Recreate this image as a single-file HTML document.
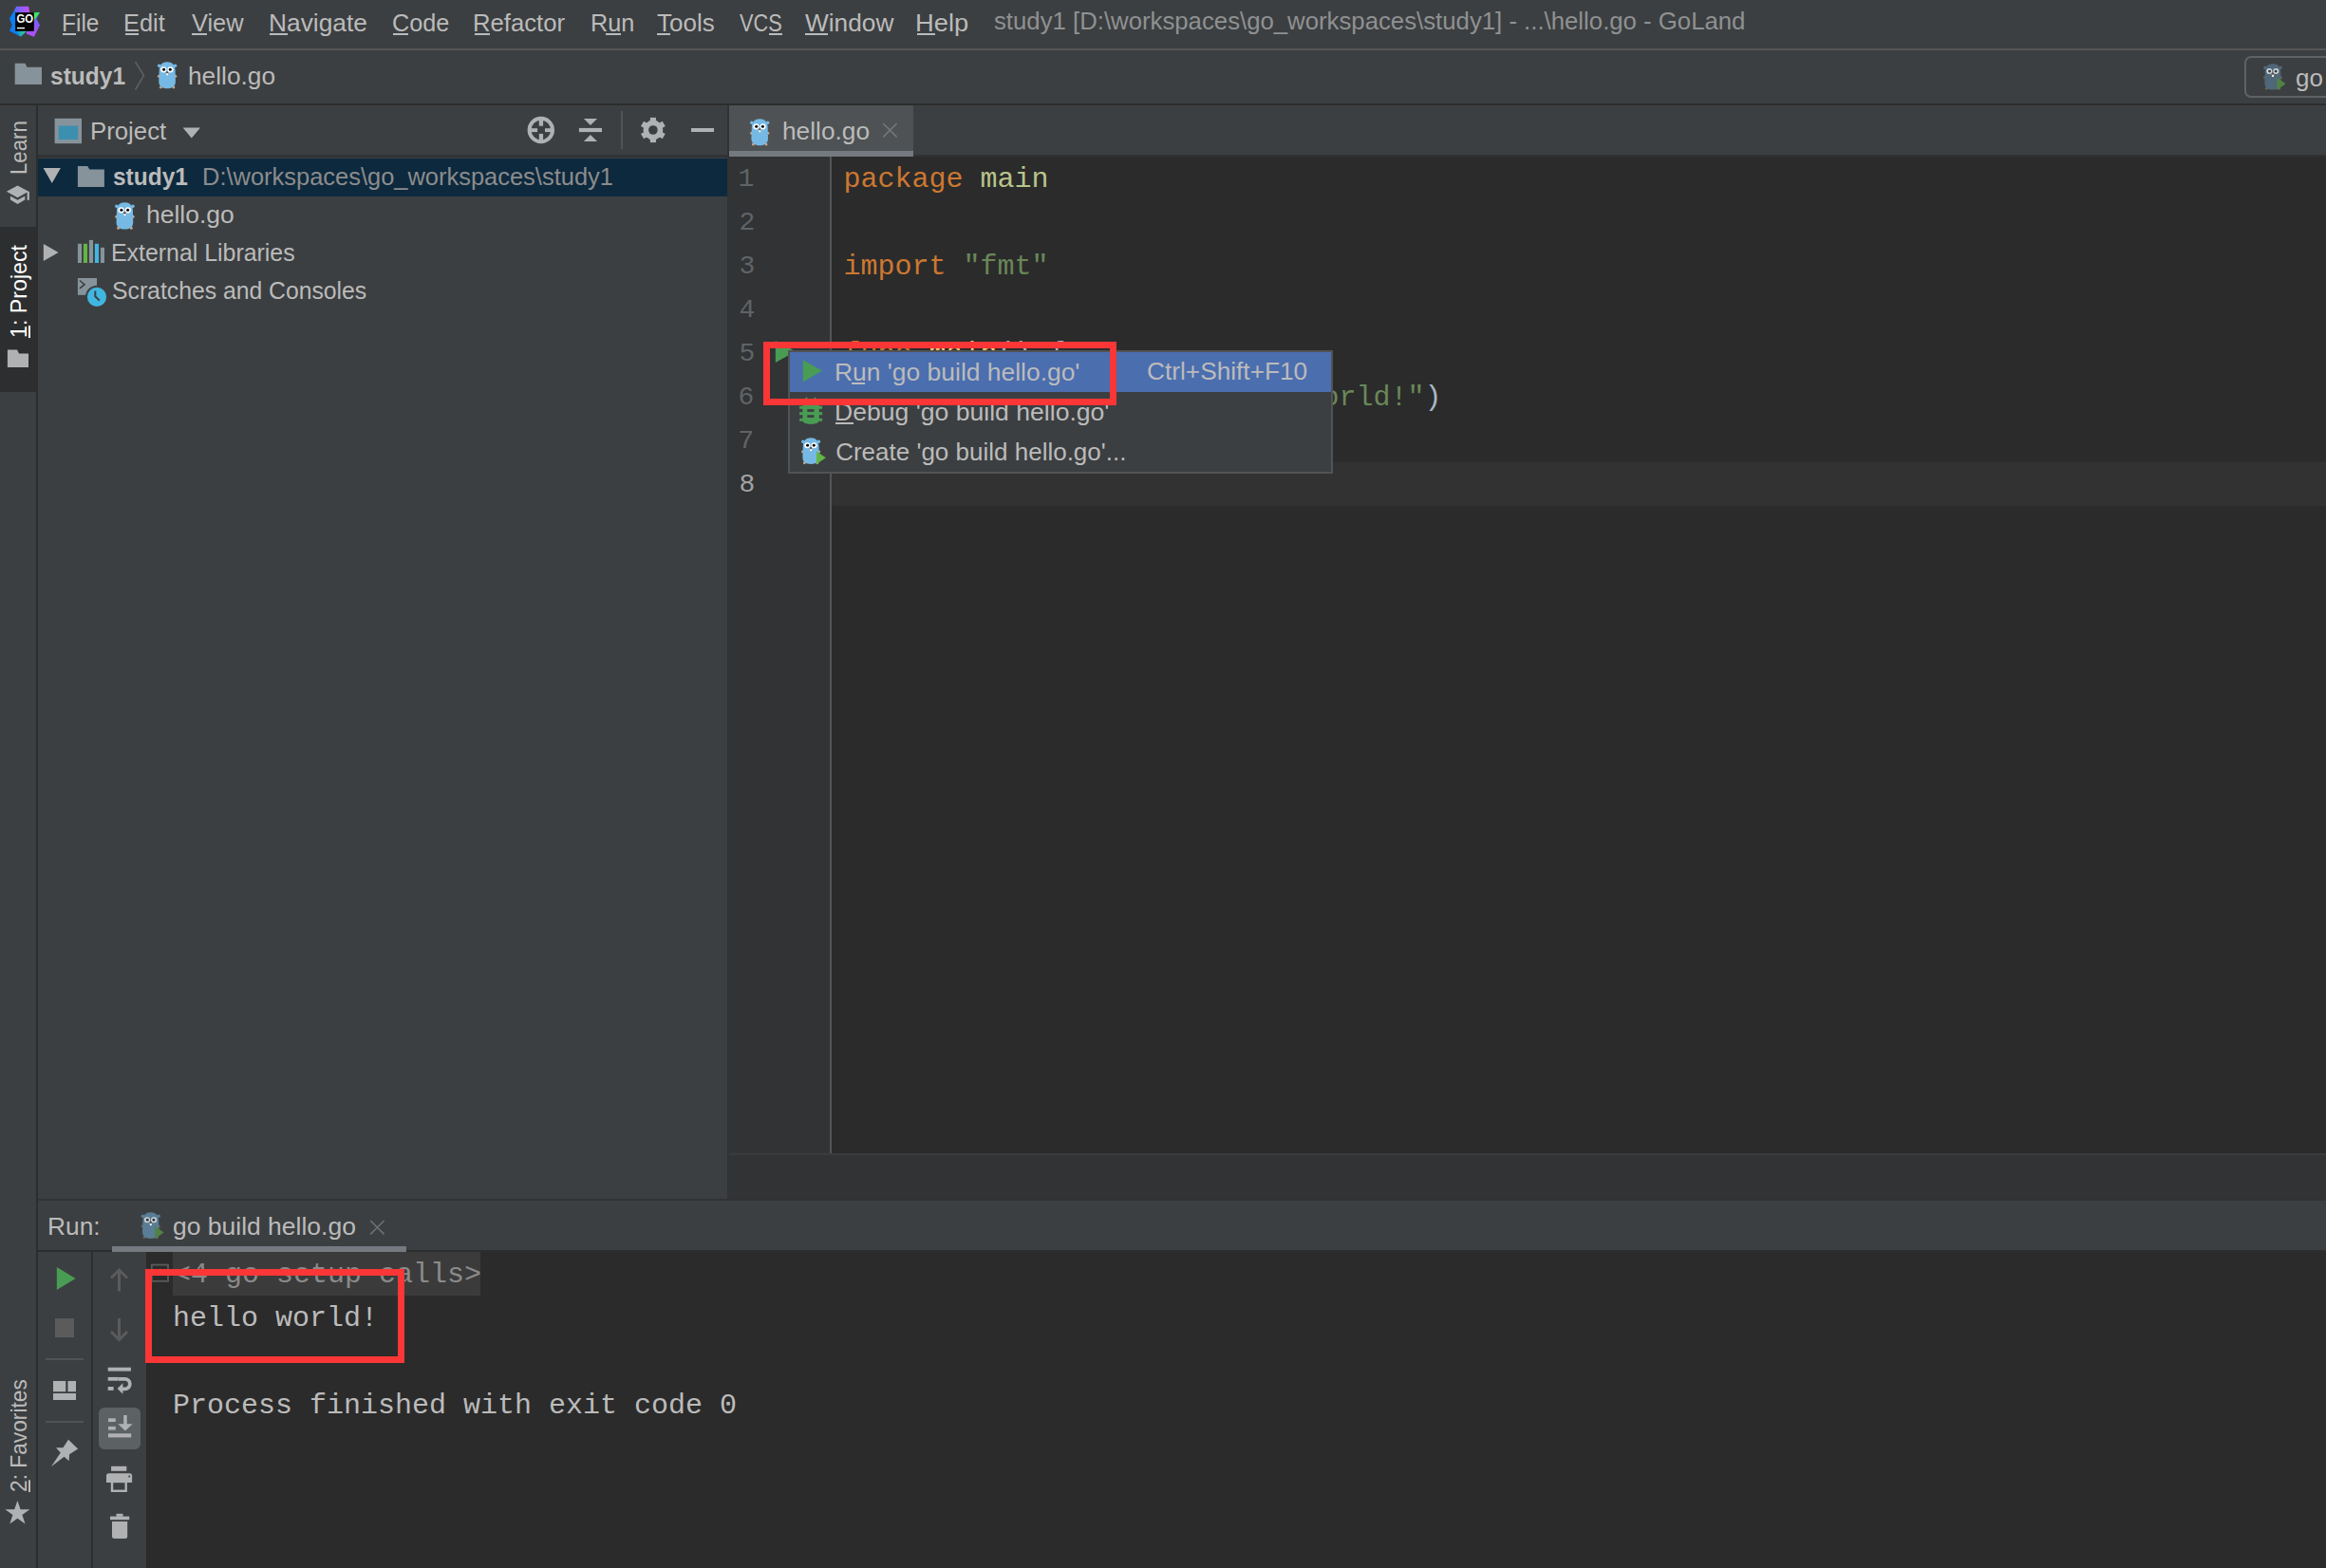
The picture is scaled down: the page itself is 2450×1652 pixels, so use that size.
<!DOCTYPE html>
<html><head><meta charset="utf-8"><style>
html,body{margin:0;padding:0;width:2450px;height:1652px;overflow:hidden;background:#3c3f41;}
.t{position:absolute;line-height:0;white-space:pre;}
svg{overflow:visible}
</style></head><body>
<div style="position:absolute;left:0px;top:51px;width:2450px;height:2px;background:#555555;"></div>
<div style="position:absolute;left:0px;top:109px;width:2450px;height:2px;background:#2d2d2d;"></div>
<div style="position:absolute;left:38px;top:111px;width:2px;height:1541px;background:#2d2d2d;"></div>
<div style="position:absolute;left:0px;top:239px;width:38px;height:174px;background:#2c2e2f;"></div>
<div style="position:absolute;left:40px;top:163px;width:726px;height:3px;background:#323334;"></div>
<div style="position:absolute;left:40px;top:167px;width:726px;height:40px;background:#0d293e;"></div>
<div style="position:absolute;left:766px;top:111px;width:2px;height:1152px;background:#313233;"></div>
<div style="position:absolute;left:768px;top:111px;width:194px;height:48px;background:#4e5254;"></div>
<div style="position:absolute;left:768px;top:159px;width:194px;height:6px;background:#747a80;"></div>
<div style="position:absolute;left:962px;top:163px;width:1488px;height:2px;background:#313131;"></div>
<div style="position:absolute;left:767px;top:165px;width:107px;height:1050px;background:#313335;"></div>
<div style="position:absolute;left:874px;top:165px;width:2px;height:1050px;background:#555555;"></div>
<div style="position:absolute;left:876px;top:165px;width:1574px;height:1050px;background:#2b2b2b;"></div>
<div style="position:absolute;left:876px;top:487px;width:1574px;height:46px;background:#323232;"></div>
<div style="position:absolute;left:767px;top:1215px;width:1683px;height:48px;background:#313335;"></div>
<div style="position:absolute;left:768px;top:1215px;width:1682px;height:2px;background:#393b3d;"></div>
<div style="position:absolute;left:40px;top:1263px;width:2410px;height:2px;background:#313233;"></div>
<div style="position:absolute;left:40px;top:1317px;width:2410px;height:2px;background:#2d2d2d;"></div>
<div style="position:absolute;left:118px;top:1313px;width:310px;height:6px;background:#747a80;"></div>
<div style="position:absolute;left:96px;top:1319px;width:2px;height:333px;background:#2d2d2d;"></div>
<div style="position:absolute;left:154px;top:1319px;width:2296px;height:333px;background:#2b2b2b;"></div>
<div style="position:absolute;left:182px;top:1319px;width:324px;height:46px;background:#3b3b3b;"></div>
<div style="position:absolute;left:66px;top:35px;width:14px;height:2px;background:#bbbbbb;"></div>
<div style="position:absolute;left:132px;top:35px;width:14px;height:2px;background:#bbbbbb;"></div>
<div style="position:absolute;left:202px;top:35px;width:16px;height:2px;background:#bbbbbb;"></div>
<div style="position:absolute;left:284px;top:35px;width:19px;height:2px;background:#bbbbbb;"></div>
<div style="position:absolute;left:414px;top:35px;width:16px;height:2px;background:#bbbbbb;"></div>
<div style="position:absolute;left:500px;top:35px;width:16px;height:2px;background:#bbbbbb;"></div>
<div style="position:absolute;left:638px;top:35px;width:16px;height:2px;background:#bbbbbb;"></div>
<div style="position:absolute;left:692px;top:35px;width:14px;height:2px;background:#bbbbbb;"></div>
<div style="position:absolute;left:810px;top:35px;width:14px;height:2px;background:#bbbbbb;"></div>
<div style="position:absolute;left:848px;top:35px;width:24px;height:2px;background:#bbbbbb;"></div>
<div style="position:absolute;left:966px;top:35px;width:19px;height:2px;background:#bbbbbb;"></div>
<svg style="position:absolute;left:0px;top:0px;" width="50" height="50" viewBox="0 0 50 50">
<defs>
<linearGradient id="lg1" x1="0" y1="0" x2="1" y2="0"><stop offset="0" stop-color="#5a6cff"/><stop offset="1" stop-color="#c84cf5"/></linearGradient>
<linearGradient id="lg2" x1="0" y1="0" x2="1" y2="0"><stop offset="0" stop-color="#0f86f5"/><stop offset="1" stop-color="#2ee07a"/></linearGradient>
<linearGradient id="lg3" x1="0" y1="0" x2="0" y2="1"><stop offset="0" stop-color="#4b6bff"/><stop offset="1" stop-color="#b94af7"/></linearGradient>
</defs>
<polygon points="17.2,6.8 30.1,6.8 31.3,13.3 16.2,13.3 15.2,10.4" fill="url(#lg1)"/>
<polygon points="15.2,10.4 16.2,13.3 16.2,32.7 21.8,38.7 10,32.6 12.7,26.5 10,19.6" fill="#0a7ff8"/>
<polygon points="16.2,32.7 28,32.7 21.8,38.7" fill="url(#lg2)"/>
<polygon points="28,32.7 35.7,32.7 35.7,22 42,13.1 38.5,20 42,26.5 35.9,38.7 27.5,35.4" fill="url(#lg3)"/>
<polygon points="35.7,13.3 42,13.1 35.7,22" fill="#3ae866"/>
<rect x="16.2" y="13.3" width="19.5" height="19.4" fill="#000"/>
<text x="17.4" y="24.1" font-family="Liberation Sans" font-weight="bold" font-size="12.2" fill="#fff" textLength="17.6" lengthAdjust="spacingAndGlyphs">GO</text>
<rect x="18" y="28.9" width="8" height="1.4" fill="#fff"/>
</svg>
<svg style="position:absolute;left:15px;top:66px;" width="30" height="24" viewBox="0 0 30 24"><path d="M0.7,0.8 H11.5 L13.5,4.7 H29 V23 H0.7 Z" fill="#87939a"/></svg>
<svg style="position:absolute;left:140px;top:64px;" width="14" height="32" viewBox="0 0 14 32"><path d="M2.5,1 L11.5,15.5 L2.5,30.5" fill="none" stroke="#5d5f61" stroke-width="1.6"/></svg>
<svg style="position:absolute;left:165.9px;top:64.8px;" width="20.2" height="28.6" viewBox="0 0 20.2 28.6"><g>
<ellipse cx="1.6" cy="4.3" rx="1.7" ry="1.8" fill="#76b9e4"/><ellipse cx="18.6" cy="4.3" rx="1.7" ry="1.8" fill="#76b9e4"/>
<circle cx="1.4" cy="15.2" r="1.5" fill="#c9a184"/><circle cx="18.8" cy="15.2" r="1.5" fill="#c9a184"/>
<circle cx="3.3" cy="27" r="1.5" fill="#c9a184"/><circle cx="16.9" cy="27" r="1.5" fill="#c9a184"/>
<path d="M1.7,9 C1.7,3 5,0.2 10.1,0.2 C15.2,0.2 18.6,3 18.6,9 L18.9,21 C18.9,26 15.3,28.3 10.1,28.3 C4.9,28.3 1.3,26 1.3,21 Z" fill="#76b9e4"/>
<circle cx="6.3" cy="8.3" r="3.1" fill="#ffffff"/><circle cx="13.5" cy="8.3" r="3.1" fill="#ffffff"/>
<circle cx="6.6" cy="8.3" r="1.5" fill="#000000"/><circle cx="13.3" cy="8.3" r="1.5" fill="#000000"/>
<ellipse cx="10.1" cy="11.6" rx="1.6" ry="1.1" fill="#c9a184"/><ellipse cx="10.1" cy="11.1" rx="1.1" ry="0.7" fill="#1a1a1a"/>
<rect x="9.2" y="12.4" width="1.9" height="1.9" fill="#ffffff"/>
</g></svg>
<div style="position:absolute;left:2364px;top:59px;width:200px;height:44px;background:transparent;border:2px solid #5f6163;border-radius:7px;box-sizing:border-box;"></div>
<svg style="position:absolute;left:2383.6px;top:66.7px;" width="20" height="27.9" viewBox="0 0 20.2 28.6"><g>
<ellipse cx="1.6" cy="4.3" rx="1.7" ry="1.8" fill="#4f6778"/><ellipse cx="18.6" cy="4.3" rx="1.7" ry="1.8" fill="#4f6778"/>
<circle cx="1.4" cy="15.2" r="1.5" fill="#6f6257"/><circle cx="18.8" cy="15.2" r="1.5" fill="#6f6257"/>
<circle cx="3.3" cy="27" r="1.5" fill="#6f6257"/><circle cx="16.9" cy="27" r="1.5" fill="#6f6257"/>
<path d="M1.7,9 C1.7,3 5,0.2 10.1,0.2 C15.2,0.2 18.6,3 18.6,9 L18.9,21 C18.9,26 15.3,28.3 10.1,28.3 C4.9,28.3 1.3,26 1.3,21 Z" fill="#4f6778"/>
<circle cx="6.3" cy="8.3" r="3.1" fill="#cfd3d6"/><circle cx="13.5" cy="8.3" r="3.1" fill="#cfd3d6"/>
<circle cx="6.6" cy="8.3" r="1.5" fill="#2b3a45"/><circle cx="13.3" cy="8.3" r="1.5" fill="#2b3a45"/>
<ellipse cx="10.1" cy="11.6" rx="1.6" ry="1.1" fill="#c9a184"/><ellipse cx="10.1" cy="11.1" rx="1.1" ry="0.7" fill="#1a1a1a"/>
<rect x="9.2" y="12.4" width="1.9" height="1.9" fill="#ffffff"/>
</g><path d="M14.6,14.8 L23.9,21.7 L14.6,28.6 Z" fill="#4f8444"/></svg>
<svg style="position:absolute;left:57px;top:124px;" width="30" height="28" viewBox="0 0 30 28"><rect x="0.6" y="0.8" width="28.4" height="26.4" fill="#87939a"/><rect x="4.6" y="8.5" width="20.6" height="14.6" fill="#3d8fb0"/></svg>
<svg style="position:absolute;left:192px;top:134px;" width="20" height="12" viewBox="0 0 20 12"><path d="M0.6,0.6 H19 L9.8,11.4 Z" fill="#afb1b3"/></svg>
<svg style="position:absolute;left:550px;top:117px;" width="40" height="40" viewBox="0 0 40 40"><circle cx="19.8" cy="20" r="12.25" fill="none" stroke="#afb1b3" stroke-width="3.9"/><rect x="17.8" y="8" width="4.3" height="7.7" fill="#afb1b3"/><rect x="17.8" y="23.9" width="4.3" height="7.7" fill="#afb1b3"/><rect x="8" y="18.2" width="8.1" height="3.9" fill="#afb1b3"/><rect x="24" y="18.2" width="8.1" height="3.9" fill="#afb1b3"/></svg>
<svg style="position:absolute;left:600px;top:117px;" width="40" height="40" viewBox="0 0 40 40"><path d="M14.9,7.9 H29 L21.95,15 Z" fill="#afb1b3"/><rect x="9.9" y="17.9" width="24.1" height="4.2" fill="#afb1b3"/><path d="M14.9,32 H29 L21.95,25 Z" fill="#afb1b3"/></svg>
<div style="position:absolute;left:654px;top:117px;width:2px;height:40px;background:#515354;"></div>
<svg style="position:absolute;left:668px;top:117px;" width="40" height="40" viewBox="0 0 40 40"><g transform="translate(19.9,20)"><circle r="10.4" fill="#afb1b3"/><rect x="-3.05" y="-13.1" width="6.1" height="8" fill="#afb1b3" transform="rotate(0)"/><rect x="-3.05" y="-13.1" width="6.1" height="8" fill="#afb1b3" transform="rotate(60)"/><rect x="-3.05" y="-13.1" width="6.1" height="8" fill="#afb1b3" transform="rotate(120)"/><rect x="-3.05" y="-13.1" width="6.1" height="8" fill="#afb1b3" transform="rotate(180)"/><rect x="-3.05" y="-13.1" width="6.1" height="8" fill="#afb1b3" transform="rotate(240)"/><rect x="-3.05" y="-13.1" width="6.1" height="8" fill="#afb1b3" transform="rotate(300)"/><circle r="4.8" fill="#3c3f41"/></g></svg>
<div style="position:absolute;left:728px;top:135px;width:24px;height:4.3px;background:#afb1b3;"></div>
<svg style="position:absolute;left:45px;top:176px;" width="20" height="18" viewBox="0 0 20 18"><path d="M0.6,1 H18.9 L9.75,17 Z" fill="#afb1b3"/></svg>
<svg style="position:absolute;left:81px;top:174px;" width="30" height="24" viewBox="0 0 30 24"><path d="M0.9,1 H11.2 L13.3,4.6 H28.9 V23 H0.9 Z" fill="#87939a"/></svg>
<svg style="position:absolute;left:121px;top:212.5px;" width="20.8" height="28.8" viewBox="0 0 20.2 28.6"><g>
<ellipse cx="1.6" cy="4.3" rx="1.7" ry="1.8" fill="#76b9e4"/><ellipse cx="18.6" cy="4.3" rx="1.7" ry="1.8" fill="#76b9e4"/>
<circle cx="1.4" cy="15.2" r="1.5" fill="#c9a184"/><circle cx="18.8" cy="15.2" r="1.5" fill="#c9a184"/>
<circle cx="3.3" cy="27" r="1.5" fill="#c9a184"/><circle cx="16.9" cy="27" r="1.5" fill="#c9a184"/>
<path d="M1.7,9 C1.7,3 5,0.2 10.1,0.2 C15.2,0.2 18.6,3 18.6,9 L18.9,21 C18.9,26 15.3,28.3 10.1,28.3 C4.9,28.3 1.3,26 1.3,21 Z" fill="#76b9e4"/>
<circle cx="6.3" cy="8.3" r="3.1" fill="#ffffff"/><circle cx="13.5" cy="8.3" r="3.1" fill="#ffffff"/>
<circle cx="6.6" cy="8.3" r="1.5" fill="#000000"/><circle cx="13.3" cy="8.3" r="1.5" fill="#000000"/>
<ellipse cx="10.1" cy="11.6" rx="1.6" ry="1.1" fill="#c9a184"/><ellipse cx="10.1" cy="11.1" rx="1.1" ry="0.7" fill="#1a1a1a"/>
<rect x="9.2" y="12.4" width="1.9" height="1.9" fill="#ffffff"/>
</g></svg>
<svg style="position:absolute;left:45px;top:256px;" width="18" height="20" viewBox="0 0 18 20"><path d="M0.8,1 L16.6,10 L0.8,19 Z" fill="#afb1b3"/></svg>
<svg style="position:absolute;left:81px;top:252px;" width="30" height="26" viewBox="0 0 30 26"><rect x="0.9" y="4.8" width="4.1" height="20.2" fill="#87939a"/><rect x="6.9" y="4.8" width="4.1" height="20.2" fill="#62b543"/><rect x="12.9" y="0.9" width="4.1" height="24.1" fill="#87939a"/><rect x="18.9" y="4.8" width="4.1" height="20.2" fill="#40b6e0"/><rect x="24.9" y="8.8" width="4.1" height="16.2" fill="#87939a"/></svg>
<svg style="position:absolute;left:81px;top:292px;" width="34" height="34" viewBox="0 0 34 34"><rect x="0.9" y="1" width="20.1" height="17.8" fill="#87939a"/><path d="M3,3.5 L8,7.7 L3,11.9" fill="none" stroke="#3c3f41" stroke-width="1.6"/><circle cx="21" cy="20.8" r="12" fill="#3c3f41"/><circle cx="21" cy="20.8" r="10.1" fill="#40b6e0"/><path d="M19.3,14.5 V20.3 L23.8,24.6" fill="none" stroke="#3c3f41" stroke-width="2"/></svg>
<svg style="position:absolute;left:2px;top:188px;" width="35" height="35" viewBox="0 0 35 35"><path d="M16.5,7.4 L28.1,13.8 L16.5,20.3 L4.9,13.8 Z M26.6,13.8 H28.9 V22.8 H26.6 Z M8.9,18.5 L16.5,22.8 L24.3,18.5 V22.5 L16.5,26.9 L8.9,22.5 Z" fill="#afb1b3"/></svg>
<svg style="position:absolute;left:7px;top:368px;" width="24" height="20" viewBox="0 0 24 20"><path d="M0.9,0.6 H11 L13,4.5 H23 V19 H0.9 Z" fill="#afb1b3"/></svg>
<svg style="position:absolute;left:5px;top:1580px;" width="28" height="28" viewBox="0 0 28 28"><path d="M13.4,1 L16.6,10.3 L26.4,10.3 L18.4,16 L21.5,25.6 L13.4,19.7 L5.3,25.6 L8.4,16 L0.4,10.3 L10.2,10.3 Z" fill="#afb1b3"/></svg>
<svg style="position:absolute;left:789.6px;top:124.6px;" width="20.4" height="28.6" viewBox="0 0 20.2 28.6"><g>
<ellipse cx="1.6" cy="4.3" rx="1.7" ry="1.8" fill="#76b9e4"/><ellipse cx="18.6" cy="4.3" rx="1.7" ry="1.8" fill="#76b9e4"/>
<circle cx="1.4" cy="15.2" r="1.5" fill="#c9a184"/><circle cx="18.8" cy="15.2" r="1.5" fill="#c9a184"/>
<circle cx="3.3" cy="27" r="1.5" fill="#c9a184"/><circle cx="16.9" cy="27" r="1.5" fill="#c9a184"/>
<path d="M1.7,9 C1.7,3 5,0.2 10.1,0.2 C15.2,0.2 18.6,3 18.6,9 L18.9,21 C18.9,26 15.3,28.3 10.1,28.3 C4.9,28.3 1.3,26 1.3,21 Z" fill="#76b9e4"/>
<circle cx="6.3" cy="8.3" r="3.1" fill="#ffffff"/><circle cx="13.5" cy="8.3" r="3.1" fill="#ffffff"/>
<circle cx="6.6" cy="8.3" r="1.5" fill="#000000"/><circle cx="13.3" cy="8.3" r="1.5" fill="#000000"/>
<ellipse cx="10.1" cy="11.6" rx="1.6" ry="1.1" fill="#c9a184"/><ellipse cx="10.1" cy="11.1" rx="1.1" ry="0.7" fill="#1a1a1a"/>
<rect x="9.2" y="12.4" width="1.9" height="1.9" fill="#ffffff"/>
</g></svg>
<svg style="position:absolute;left:929px;top:129px;" width="18" height="17" viewBox="0 0 18 17"><path d="M1.2,1 L15.6,15.3 M15.6,1 L1.2,15.3" stroke="#757575" stroke-width="1.7"/></svg>
<svg style="position:absolute;left:816px;top:358px;" width="24" height="26" viewBox="0 0 24 26"><path d="M0.8,1 L22,12.2 L0.8,24 Z" fill="#499c54"/></svg>
<svg style="position:absolute;left:148px;top:1277px;" width="21.5" height="28.3" viewBox="0 0 20.2 28.6"><g>
<ellipse cx="1.6" cy="4.3" rx="1.7" ry="1.8" fill="#5a7d96"/><ellipse cx="18.6" cy="4.3" rx="1.7" ry="1.8" fill="#5a7d96"/>
<circle cx="1.4" cy="15.2" r="1.5" fill="#6f6257"/><circle cx="18.8" cy="15.2" r="1.5" fill="#6f6257"/>
<circle cx="3.3" cy="27" r="1.5" fill="#6f6257"/><circle cx="16.9" cy="27" r="1.5" fill="#6f6257"/>
<path d="M1.7,9 C1.7,3 5,0.2 10.1,0.2 C15.2,0.2 18.6,3 18.6,9 L18.9,21 C18.9,26 15.3,28.3 10.1,28.3 C4.9,28.3 1.3,26 1.3,21 Z" fill="#5a7d96"/>
<circle cx="6.3" cy="8.3" r="3.1" fill="#cfd3d6"/><circle cx="13.5" cy="8.3" r="3.1" fill="#cfd3d6"/>
<circle cx="6.6" cy="8.3" r="1.5" fill="#2b3a45"/><circle cx="13.3" cy="8.3" r="1.5" fill="#2b3a45"/>
<ellipse cx="10.1" cy="11.6" rx="1.6" ry="1.1" fill="#c9a184"/><ellipse cx="10.1" cy="11.1" rx="1.1" ry="0.7" fill="#1a1a1a"/>
<rect x="9.2" y="12.4" width="1.9" height="1.9" fill="#ffffff"/>
</g><path d="M14.6,14.8 L23.9,21.7 L14.6,28.6 Z" fill="#4f8444"/></svg>
<svg style="position:absolute;left:389px;top:1285px;" width="18" height="17" viewBox="0 0 18 17"><path d="M1.2,1 L15.6,15.3 M15.6,1 L1.2,15.3" stroke="#6e6e6e" stroke-width="1.7"/></svg>
<svg style="position:absolute;left:59px;top:1334px;" width="22" height="26" viewBox="0 0 22 26"><path d="M0.8,1 L20.6,13 L0.8,25 Z" fill="#499c54"/></svg>
<div style="position:absolute;left:58px;top:1389px;width:20px;height:20px;background:#5b5b5b;"></div>
<div style="position:absolute;left:48px;top:1431px;width:40px;height:2px;background:#515354;"></div>
<svg style="position:absolute;left:55px;top:1454px;" width="26" height="22" viewBox="0 0 26 22"><rect x="1" y="1" width="13.2" height="11.2" fill="#afb1b3"/><rect x="16.5" y="1" width="8.5" height="11.2" fill="#afb1b3"/><rect x="1" y="14" width="24" height="7" fill="#afb1b3"/></svg>
<div style="position:absolute;left:48px;top:1497px;width:40px;height:2px;background:#515354;"></div>
<svg style="position:absolute;left:48px;top:1512px;" width="40" height="40" viewBox="0 0 40 40"><path d="M24,4.7 L34.1,14.5 L25.1,20.2 L24.6,27.2 L19.6,22.8 L5.9,33.3 L15.8,18.4 L11,13.3 L18.4,13.3 Z" fill="#afb1b3"/></svg>
<svg style="position:absolute;left:115px;top:1336px;" width="22" height="26" viewBox="0 0 22 26"><path d="M10.5,2 V24.5 M2,10.5 L10.5,2 L19,10.5" fill="none" stroke="#5b5b5b" stroke-width="3"/></svg>
<svg style="position:absolute;left:115px;top:1388px;" width="22" height="26" viewBox="0 0 22 26"><path d="M10.5,1 V23.5 M2,15 L10.5,23.5 L19,15" fill="none" stroke="#5b5b5b" stroke-width="3"/></svg>
<svg style="position:absolute;left:113px;top:1440px;" width="28" height="30" viewBox="0 0 28 30"><rect x="0.7" y="0.7" width="24.2" height="3.9" fill="#afb1b3"/><rect x="0.7" y="21" width="5.9" height="3.9" fill="#afb1b3"/><rect x="0.7" y="10.9" width="11" height="3.8" fill="#afb1b3"/><path d="M11.7,12.8 H18.5 A5.3,5.3 0 0 1 18.5,23.4 H15" fill="none" stroke="#afb1b3" stroke-width="3.8"/><path d="M16.4,17.2 L10.6,23.1 L16.4,28.8 Z" fill="#afb1b3"/></svg>
<div style="position:absolute;left:104px;top:1483px;width:44px;height:43.5px;background:#5c6164;border-radius:6px;"></div>
<svg style="position:absolute;left:113px;top:1490px;" width="28" height="26" viewBox="0 0 28 26"><rect x="1" y="4.3" width="7.8" height="3.7" fill="#afb1b3"/><rect x="1" y="12.9" width="7.8" height="3.7" fill="#afb1b3"/><rect x="1" y="20.3" width="24.2" height="4.1" fill="#afb1b3"/><rect x="17.2" y="1" width="3.5" height="12" fill="#afb1b3"/><path d="M11.2,10.2 H26.7 L19,17.6 Z" fill="#afb1b3"/></svg>
<svg style="position:absolute;left:111px;top:1544px;" width="30" height="28" viewBox="0 0 30 28"><rect x="6.1" y="0.8" width="16.2" height="5" fill="#afb1b3"/><path d="M1,10.8 Q1,8.2 3.6,8.2 H25.5 Q28.1,8.2 28.1,10.8 V18 H1 Z" fill="#afb1b3"/><rect x="7" y="17" width="14.7" height="9.8" fill="none" stroke="#afb1b3" stroke-width="2.4"/><circle cx="25.2" cy="11.6" r="1" fill="#3c3f41"/></svg>
<svg style="position:absolute;left:115px;top:1594px;" width="22" height="28" viewBox="0 0 22 28"><rect x="1" y="3.6" width="20.2" height="3.6" fill="#afb1b3"/><rect x="7.5" y="0.8" width="7" height="3" fill="#afb1b3"/><path d="M3,9.1 H19.2 V24.5 Q19.2,27 16.7,27 H5.5 Q3,27 3,24.5 Z" fill="#afb1b3"/></svg>
<svg style="position:absolute;left:158px;top:1331px;" width="22" height="22" viewBox="0 0 22 22"><rect x="1.8" y="1.6" width="17.2" height="17.2" fill="none" stroke="#5a5a5a" stroke-width="1.8"/><rect x="10" y="5.5" width="1.4" height="3" fill="#5a5a5a"/></svg>
<div class="t" style="left:65.22px;top:24.49px;font-size:26px;font-family:'Liberation Sans', sans-serif;font-weight:400;color:#bbbbbb;transform:scaleX(0.9408);transform-origin:0 0;">File</div>
<div class="t" style="left:130.35px;top:24.49px;font-size:26px;font-family:'Liberation Sans', sans-serif;font-weight:400;color:#bbbbbb;transform:scaleX(0.9753);transform-origin:0 0;">Edit</div>
<div class="t" style="left:202.00px;top:24.49px;font-size:26px;font-family:'Liberation Sans', sans-serif;font-weight:400;color:#bbbbbb;transform:scaleX(0.9767);transform-origin:0 0;">View</div>
<div class="t" style="left:282.58px;top:24.49px;font-size:26px;font-family:'Liberation Sans', sans-serif;font-weight:400;color:#bbbbbb;transform:scaleX(1.0124);transform-origin:0 0;">Navigate</div>
<div class="t" style="left:413.03px;top:24.49px;font-size:26px;font-family:'Liberation Sans', sans-serif;font-weight:400;color:#bbbbbb;transform:scaleX(0.9721);transform-origin:0 0;">Code</div>
<div class="t" style="left:498.43px;top:24.49px;font-size:26px;font-family:'Liberation Sans', sans-serif;font-weight:400;color:#bbbbbb;transform:scaleX(0.9865);transform-origin:0 0;">Refactor</div>
<div class="t" style="left:621.66px;top:24.49px;font-size:26px;font-family:'Liberation Sans', sans-serif;font-weight:400;color:#bbbbbb;transform:scaleX(0.9721);transform-origin:0 0;">Run</div>
<div class="t" style="left:692.00px;top:24.49px;font-size:26px;font-family:'Liberation Sans', sans-serif;font-weight:400;color:#bbbbbb;">Tools</div>
<div class="t" style="left:779.00px;top:24.49px;font-size:26px;font-family:'Liberation Sans', sans-serif;font-weight:400;color:#bbbbbb;transform:scaleX(0.8359);transform-origin:0 0;">VCS</div>
<div class="t" style="left:848.00px;top:24.49px;font-size:26px;font-family:'Liberation Sans', sans-serif;font-weight:400;color:#bbbbbb;transform:scaleX(1.0097);transform-origin:0 0;">Window</div>
<div class="t" style="left:964.30px;top:24.49px;font-size:26px;font-family:'Liberation Sans', sans-serif;font-weight:400;color:#bbbbbb;transform:scaleX(1.0507);transform-origin:0 0;">Help</div>
<div class="t" style="left:1047.00px;top:22.49px;font-size:26px;font-family:'Liberation Sans', sans-serif;font-weight:400;color:#8f9192;transform:scaleX(0.9903);transform-origin:0 0;">study1 [D:\workspaces\go_workspaces\study1] - ...\hello.go - GoLand</div>
<div class="t" style="left:53.00px;top:79.99px;font-size:26px;font-family:'Liberation Sans', sans-serif;font-weight:700;color:#bbbbbb;transform:scaleX(0.9431);transform-origin:0 0;">study1</div>
<div class="t" style="left:197.99px;top:79.99px;font-size:26px;font-family:'Liberation Sans', sans-serif;font-weight:400;color:#bbbbbb;transform:scaleX(1.0110);transform-origin:0 0;">hello.go</div>
<div class="t" style="left:2418.00px;top:81.99px;font-size:26px;font-family:'Liberation Sans', sans-serif;font-weight:400;color:#bbbbbb;">go</div>
<div class="t" style="left:95.02px;top:137.99px;font-size:26px;font-family:'Liberation Sans', sans-serif;font-weight:400;color:#bbbbbb;transform:scaleX(0.9913);transform-origin:0 0;">Project</div>
<div class="t" style="left:119.30px;top:186.19px;font-size:26px;font-family:'Liberation Sans', sans-serif;font-weight:700;color:#bbbbbb;transform:scaleX(0.9419);transform-origin:0 0;">study1</div>
<div class="t" style="left:213.04px;top:186.19px;font-size:26px;font-family:'Liberation Sans', sans-serif;font-weight:400;color:#8c8c8c;transform:scaleX(0.9790);transform-origin:0 0;">D:\workspaces\go_workspaces\study1</div>
<div class="t" style="left:153.78px;top:225.99px;font-size:26px;font-family:'Liberation Sans', sans-serif;font-weight:400;color:#bbbbbb;transform:scaleX(1.0177);transform-origin:0 0;">hello.go</div>
<div class="t" style="left:116.79px;top:265.99px;font-size:26px;font-family:'Liberation Sans', sans-serif;font-weight:400;color:#bbbbbb;transform:scaleX(0.9570);transform-origin:0 0;">External Libraries</div>
<div class="t" style="left:117.75px;top:305.79px;font-size:26px;font-family:'Liberation Sans', sans-serif;font-weight:400;color:#bbbbbb;transform:scaleX(0.9518);transform-origin:0 0;">Scratches and Consoles</div>
<div class="t" style="left:823.99px;top:137.99px;font-size:26px;font-family:'Liberation Sans', sans-serif;font-weight:400;color:#bbbbbb;transform:scaleX(1.0110);transform-origin:0 0;">hello.go</div>
<div class="t" style="left:777.60px;top:189.34px;font-size:28px;font-family:'Liberation Mono', monospace;font-weight:400;color:#606366;">1</div>
<div class="t" style="left:778.60px;top:235.34px;font-size:28px;font-family:'Liberation Mono', monospace;font-weight:400;color:#606366;">2</div>
<div class="t" style="left:778.60px;top:281.34px;font-size:28px;font-family:'Liberation Mono', monospace;font-weight:400;color:#606366;">3</div>
<div class="t" style="left:778.60px;top:327.34px;font-size:28px;font-family:'Liberation Mono', monospace;font-weight:400;color:#606366;">4</div>
<div class="t" style="left:778.60px;top:373.34px;font-size:28px;font-family:'Liberation Mono', monospace;font-weight:400;color:#606366;">5</div>
<div class="t" style="left:777.60px;top:419.34px;font-size:28px;font-family:'Liberation Mono', monospace;font-weight:400;color:#606366;">6</div>
<div class="t" style="left:777.60px;top:465.34px;font-size:28px;font-family:'Liberation Mono', monospace;font-weight:400;color:#606366;">7</div>
<div class="t" style="left:778.60px;top:511.34px;font-size:28px;font-family:'Liberation Mono', monospace;font-weight:400;color:#a4a3a3;">8</div>
<div class="t" style="left:50.37px;top:1292.39px;font-size:26px;font-family:'Liberation Sans', sans-serif;font-weight:400;color:#bbbbbb;transform:scaleX(1.0139);transform-origin:0 0;">Run:</div>
<div class="t" style="left:181.98px;top:1292.19px;font-size:26px;font-family:'Liberation Sans', sans-serif;font-weight:400;color:#bbbbbb;transform:scaleX(1.0185);transform-origin:0 0;">go build hello.go</div>
<div class="t" style="left:20.38px;top:184.02px;font-size:24px;font-family:'Liberation Sans', sans-serif;font-weight:400;color:#bbbbbb;transform:rotate(-90deg) scaleX(0.9249);transform-origin:0 0;">Learn</div>
<div class="t" style="left:20.38px;top:356.37px;font-size:24px;font-family:'Liberation Sans', sans-serif;font-weight:400;color:#ffffff;transform:rotate(-90deg) scaleX(0.9671);transform-origin:0 0;"><u style="text-decoration-thickness:2px;text-underline-offset:2px">1</u>: Project</div>
<div class="t" style="left:19.88px;top:1571.95px;font-size:24px;font-family:'Liberation Sans', sans-serif;font-weight:400;color:#bbbbbb;transform:rotate(-90deg) scaleX(0.9471);transform-origin:0 0;"><u style="text-decoration-thickness:2px;text-underline-offset:2px">2</u>: Favorites</div>
<div class="t" style="left:888.40px;top:188.81px;font-size:30px;font-family:'Liberation Mono', monospace"><span style="color:#cc7832">package</span><span style="color:#a9b7c6"> </span><span style="color:#b9c48a">main</span></div>
<div class="t" style="left:888.40px;top:280.81px;font-size:30px;font-family:'Liberation Mono', monospace"><span style="color:#cc7832">import</span><span style="color:#a9b7c6"> </span><span style="color:#6a8759">"fmt"</span></div>
<div class="t" style="left:888.40px;top:372.81px;font-size:30px;font-family:'Liberation Mono', monospace"><span style="color:#cc7832">func</span><span style="color:#a9b7c6"> </span><span style="color:#ffc66d">main</span><span style="color:#a9b7c6">() {</span></div>
<div class="t" style="left:888.40px;top:418.81px;font-size:30px;font-family:'Liberation Mono', monospace"><span style="color:#a9b7c6">        fmt.</span><span style="color:#ffc66d">Println</span><span style="color:#a9b7c6">(</span><span style="color:#6a8759">"hello world!"</span><span style="color:#a9b7c6">)</span></div>
<div class="t" style="left:888.40px;top:464.81px;font-size:30px;font-family:'Liberation Mono', monospace"><span style="color:#a9b7c6">}</span></div>
<div class="t" style="left:183.00px;top:1343.31px;font-size:30px;font-family:'Liberation Mono', monospace"><span style="color:#8a8a8a">&lt;4 go setup calls&gt;</span></div>
<div class="t" style="left:182.00px;top:1388.81px;font-size:30px;font-family:'Liberation Mono', monospace"><span style="color:#bbbbbb">hello world!</span></div>
<div class="t" style="left:182.00px;top:1481.01px;font-size:30px;font-family:'Liberation Mono', monospace"><span style="color:#bbbbbb">Process finished with exit code 0</span></div>
<div style="position:absolute;left:830px;top:369px;width:574px;height:130px;background:#3c3f41;border:2px solid #525354;box-sizing:border-box;"></div>
<div style="position:absolute;left:832px;top:371px;width:570px;height:42px;background:#4b6eaf;"></div>
<svg style="position:absolute;left:845px;top:378px" width="22" height="26" viewBox="0 0 22 26"><path d="M0.8,1.2 L20.9,12.6 L0.8,24.6 Z" fill="#499c54"/></svg>
<svg style="position:absolute;left:836px;top:414px" width="40" height="40" viewBox="0 0 40 40"><g fill="#499c54"><rect x="6.1" y="13.8" width="24" height="3"/><rect x="6.1" y="20.2" width="24" height="3"/><rect x="6.1" y="26.8" width="24" height="3"/><path d="M9.4,6 H26.8 V28.8 Q26.8,32.9 18.1,32.9 Q9.4,32.9 9.4,28.8 Z"/><circle cx="13.4" cy="5.6" r="1"/><circle cx="22.4" cy="5.6" r="1"/></g><g fill="#3c3f41"><rect x="14.3" y="17.1" width="7.1" height="2.8"/><rect x="14.3" y="23.2" width="7.1" height="2.8"/></g></svg>
<div style="position:absolute;left:897px;top:403px;width:14px;height:2px;background:#bbbbbb"></div>
<div style="position:absolute;left:880px;top:445px;width:19px;height:2px;background:#bbbbbb"></div>
<svg style="position:absolute;left:843.9px;top:460.7px;" width="20.2" height="28.3" viewBox="0 0 20.2 28.6"><g>
<ellipse cx="1.6" cy="4.3" rx="1.7" ry="1.8" fill="#76b9e4"/><ellipse cx="18.6" cy="4.3" rx="1.7" ry="1.8" fill="#76b9e4"/>
<circle cx="1.4" cy="15.2" r="1.5" fill="#c9a184"/><circle cx="18.8" cy="15.2" r="1.5" fill="#c9a184"/>
<circle cx="3.3" cy="27" r="1.5" fill="#c9a184"/><circle cx="16.9" cy="27" r="1.5" fill="#c9a184"/>
<path d="M1.7,9 C1.7,3 5,0.2 10.1,0.2 C15.2,0.2 18.6,3 18.6,9 L18.9,21 C18.9,26 15.3,28.3 10.1,28.3 C4.9,28.3 1.3,26 1.3,21 Z" fill="#76b9e4"/>
<circle cx="6.3" cy="8.3" r="3.1" fill="#ffffff"/><circle cx="13.5" cy="8.3" r="3.1" fill="#ffffff"/>
<circle cx="6.6" cy="8.3" r="1.5" fill="#000000"/><circle cx="13.3" cy="8.3" r="1.5" fill="#000000"/>
<ellipse cx="10.1" cy="11.6" rx="1.6" ry="1.1" fill="#c9a184"/><ellipse cx="10.1" cy="11.1" rx="1.1" ry="0.7" fill="#1a1a1a"/>
<rect x="9.2" y="12.4" width="1.9" height="1.9" fill="#ffffff"/>
</g></svg>
<svg style="position:absolute;left:858px;top:474px" width="14" height="16" viewBox="0 0 14 16"><path d="M2,1.5 L11.9,8.25 L2,15 Z" fill="#62b543"/></svg>
<div class="t" style="left:879.17px;top:391.59px;font-size:26px;font-family:'Liberation Sans', sans-serif;font-weight:400;color:#bbbbbb;transform:scaleX(1.0165);transform-origin:0 0;">Run 'go build hello.go'</div>
<div class="t" style="left:1207.79px;top:391.29px;font-size:26px;font-family:'Liberation Sans', sans-serif;font-weight:400;color:#bbbbbb;transform:scaleX(1.0092);transform-origin:0 0;">Ctrl+Shift+F10</div>
<div class="t" style="left:879.16px;top:433.69px;font-size:26px;font-family:'Liberation Sans', sans-serif;font-weight:400;color:#bbbbbb;transform:scaleX(1.0222);transform-origin:0 0;">Debug 'go build hello.go'</div>
<div class="t" style="left:880.20px;top:475.89px;font-size:26px;font-family:'Liberation Sans', sans-serif;font-weight:400;color:#bbbbbb;">Create 'go build hello.go'...</div>
<div style="position:absolute;left:804px;top:360px;width:372px;height:67px;border:7px solid #fa3636;box-sizing:border-box;"></div>
<div style="position:absolute;left:153px;top:1337px;width:273px;height:99px;border:7px solid #fa3636;box-sizing:border-box;"></div>
</body></html>
